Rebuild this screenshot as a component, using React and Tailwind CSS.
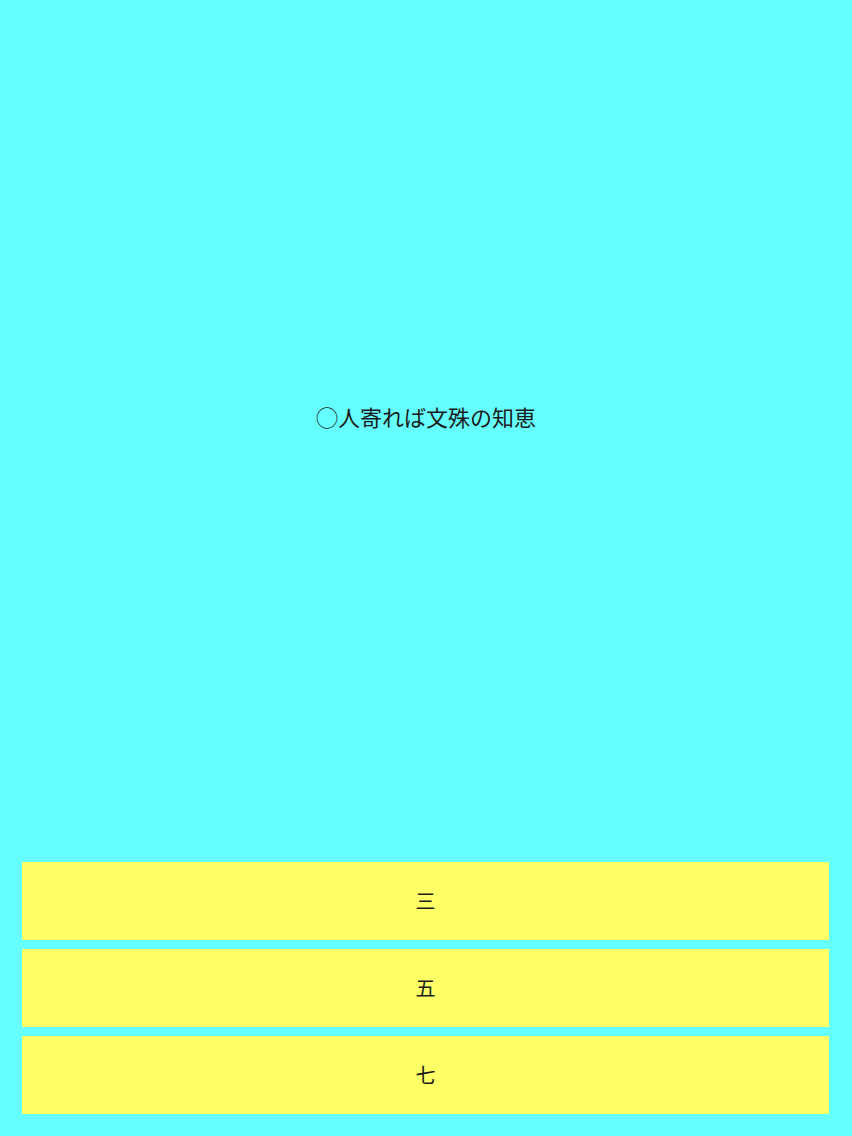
const question = "◯人寄れば文殊の知恵";
const choices = ["三", "五", "七"];

export default function App() {
  return (
    <div
      className="w-[852px] h-[1136px] bg-[#66ffff] flex flex-col text-[#1a1a1a]"
      style={{ fontFamily: '"Noto Sans CJK JP", "Noto Sans", sans-serif' }}
    >
      <div className="h-[832px] flex items-center justify-center text-[22px]">
        {question}
      </div>
      <div className="flex flex-col gap-[9px] pl-[22px] pr-[23px] mt-[30px]">
        {choices.map((c) => (
          <button
            key={c}
            className="h-[78px] w-full bg-[#ffff66] flex items-center justify-center text-[20px]"
          >
            {c}
          </button>
        ))}
      </div>
    </div>
  );
}
